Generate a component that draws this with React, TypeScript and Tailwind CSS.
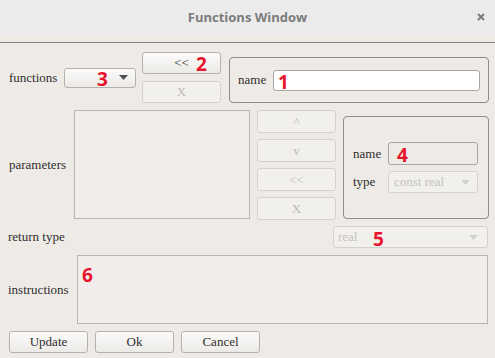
import React from 'react';

const serif = { fontFamily: '"Liberation Serif", "Times New Roman", serif' };

// red annotation numbers drawn over the widgets
const Mark = ({ n, className }: { n: string; className: string }) => (
  <span
    className={`absolute text-[19px] font-bold leading-none text-[#e8142c] ${className}`}
    style={{ fontFamily: '"Open Sans", "DejaVu Sans", sans-serif' }}
  >
    {n}
  </span>
);

const Arrow = ({ light }: { light?: boolean }) => (
  <svg width="9" height="5" viewBox="0 0 9 5">
    <path d="M0 0 L9 0 L4.5 5 Z" fill={light ? '#d2d0cd' : '#505050'} />
  </svg>
);

const Btn = ({ label, disabled, className = '' }: { label: string; disabled?: boolean; className?: string }) => (
  <div
    className={`flex items-center justify-center rounded-[3px] border text-[13px] ${
      disabled
        ? 'border-[#d5d2ce] bg-[#f2f0ed] text-[#bdbbb8]'
        : 'border-[#b5b2ae] bg-gradient-to-b from-[#fbfbfa] to-[#eceae7] text-[#2e2e2e]'
    } ${className}`}
  >
    {label}
  </div>
);

export default function App() {
  return (
    <div className="w-[495px] h-[358px] overflow-hidden bg-[#eeebe7] text-[#2e2e2e]" style={serif}>
      {/* title bar */}
      <div className="relative flex h-[35px] items-center justify-center bg-[#ebebeb]">
        <span
          className="text-[13px] font-bold text-[#7b7b7b]"
          style={{ fontFamily: '"Open Sans", "DejaVu Sans", sans-serif' }}
        >
          Functions Window
        </span>
        <svg className="absolute right-[10px] top-[13px]" width="8" height="8" viewBox="0 0 8 8">
          <path d="M1 1 L7 7 M7 1 L1 7" stroke="#7d7d7d" strokeWidth="2" />
        </svg>
      </div>

      <div className="mt-[7px] border-t border-[#858585] pl-[8px] pr-[6px] pt-[9px] text-[13px]">
        {/* functions row */}
        <div className="flex h-[51px] items-center">
          <span className="w-[56px] pl-[1px]">functions</span>
          <div className="relative flex h-[20px] w-[72px] items-center justify-end rounded-[3px] border border-[#b5b2ae] bg-gradient-to-b from-[#fbfbfa] to-[#eceae7] pr-[7px]">
            <Mark n="3" className="left-[32px] top-[1px]" />
            <Arrow />
          </div>
          <div className="ml-[6px] flex w-[79px] flex-col gap-[7px]">
            <div className="relative">
              <Btn label="<<" className="h-[22px]" />
              <Mark n="2" className="left-[54px] top-[3px]" />
            </div>
            <Btn label="X" disabled className="h-[22px]" />
          </div>
          <div className="ml-[8px] flex h-[46px] flex-1 items-center self-end rounded-[4px] border border-[#8c8c8c] pl-[8px] pr-[8px]">
            <span className="w-[35px]">name</span>
            <div className="relative h-[21px] flex-1 rounded-[3px] border border-[#a8a6a3] bg-white">
              <Mark n="1" className="left-[4px] top-[2px]" />
            </div>
          </div>
        </div>

        {/* parameters row */}
        <div className="mt-[7px] flex h-[110px]">
          <span className="flex w-[66px] items-center pl-[1px]">parameters</span>
          <div className="h-[109px] w-[176px] border border-[#b9b6b2] bg-[#f0edea]" />
          <div className="ml-[7px] flex w-[79px] flex-col gap-[6px]">
            <Btn label="^" disabled className="h-[23px]" />
            <Btn label="v" disabled className="h-[23px]" />
            <Btn label="<<" disabled className="h-[23px]" />
            <Btn label="X" disabled className="h-[23px]" />
          </div>
          <div className="ml-[7px] mt-[6px] flex h-[103px] w-[146px] flex-col gap-[6px] rounded-[4px] border border-[#8c8c8c] pl-[9px] pt-[25px]">
            <div className="flex items-center">
              <span className="w-[35px]">name</span>
              <div className="relative h-[23px] w-[90px] rounded-[3px] border border-[#a8a6a3] bg-[#eeebe7]">
                <Mark n="4" className="left-[8px] top-[3px]" />
              </div>
            </div>
            <div className="flex items-center">
              <span className="w-[35px]">type</span>
              <div className="flex h-[22px] w-[90px] items-center justify-between rounded-[3px] border border-[#d5d2ce] bg-[#f2f0ed] pl-[5px] pr-[7px] text-[#c4c2bf]">
                <span>const real</span>
                <Arrow light />
              </div>
            </div>
          </div>
        </div>

        {/* return type row */}
        <div className="mt-[6px] flex h-[22px] items-center justify-between">
          <span>return type</span>
          <div className="relative mr-[1px] flex h-[22px] w-[155px] items-center justify-between rounded-[3px] border border-[#d5d2ce] bg-[#f2f0ed] pl-[4px] pr-[9px] text-[#c4c2bf]">
            <span>real</span>
            <Mark n="5" className="left-[39px] top-[3px]" />
            <Arrow light />
          </div>
        </div>

        {/* instructions row */}
        <div className="mt-[7px] flex h-[69px] items-center">
          <span className="w-[69px]">instructions</span>
          <div className="relative mr-[1px] h-[69px] flex-1 border border-[#b9b6b2] bg-[#f0edea]">
            <Mark n="6" className="left-[4px] top-[10px]" />
          </div>
        </div>

        {/* bottom buttons */}
        <div className="mt-[7px] flex gap-[7px] pl-[1px]">
          <Btn label="Update" className="h-[22px] w-[79px]" />
          <Btn label="Ok" className="h-[22px] w-[79px]" />
          <Btn label="Cancel" className="h-[22px] w-[79px]" />
        </div>
      </div>
    </div>
  );
}
